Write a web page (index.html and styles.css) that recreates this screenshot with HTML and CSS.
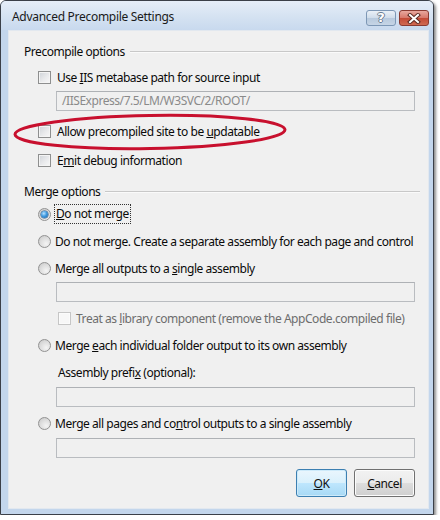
FILE: index.html
```html
<!DOCTYPE html>
<html>
<head>
<meta charset="utf-8">
<title>Advanced Precompile Settings</title>
<link rel="stylesheet" href="styles.css">
</head>
<body>
<div class="window">
  <div class="titlebar">
    <span class="title">Advanced Precompile Settings</span>
    <div class="caption-btns">
      <span class="cbtn help">?</span>
      <span class="cbtn close">
        <svg width="14" height="11" viewBox="0 0 14 11">
          <path d="M3 2 L11 9 M11 2 L3 9" stroke="#5a2a22" stroke-width="4" stroke-linecap="square" fill="none"/>
          <path d="M3 2 L11 9 M11 2 L3 9" stroke="#ffffff" stroke-width="2" stroke-linecap="square" fill="none"/>
        </svg>
      </span>
    </div>
  </div>
  <div class="client">
    <div class="group-head g1"><span>Precompile options</span><span class="rule"></span></div>
    <div class="row ind cb1"><span class="check"></span><span>Use <u>I</u>IS metabase path for source input</span></div>
    <div class="textbox tb1">/IISExpress/7.5/LM/W3SVC/2/ROOT/</div>
    <div class="row ind cb2"><span class="check"></span><span>Allow precompiled site to be <u>u</u>pdatable</span></div>
    <div class="row ind cb3"><span class="check"></span><span>E<u>m</u>it debug information</span></div>

    <div class="group-head g2"><span>Merge options</span><span class="rule"></span></div>
    <div class="row rad r1"><span class="radio on"></span><span class="focus"><u>D</u>o not merge</span></div>
    <div class="row rad r2"><span class="radio"></span><span>Do not merge. Create a separate assembly for each page and control</span></div>
    <div class="row rad r3"><span class="radio"></span><span>Merge all outputs to a <u>s</u>ingle assembly</span></div>
    <div class="textbox tb2"></div>
    <div class="row sub disabled cb4"><span class="check dis"></span><span>Treat as <u>l</u>ibrary component (remove the AppCode.compiled file)</span></div>
    <div class="row rad r4"><span class="radio"></span><span>Merge <u>e</u>ach individual folder output to its own assembly</span></div>
    <div class="row sub plabel"><span>Assembly prefi<u>x</u> (optional):</span></div>
    <div class="textbox tb3"></div>
    <div class="row rad r5"><span class="radio"></span><span>Merge all pages and co<u>n</u>trol outputs to a single assembly</span></div>
    <div class="textbox tb4"></div>

    <div class="buttons">
      <span class="btn default"><u>O</u>K</span>
      <span class="btn cancel"><u>C</u>ancel</span>
    </div>

    <svg class="annot" width="280" height="42" viewBox="0 0 280 42">
      <ellipse cx="138" cy="20" rx="135" ry="16.5" fill="none" stroke="#c8102e" stroke-width="3" transform="rotate(-1 138 20)"/>
    </svg>
  </div>
</div>
</body>
</html>
```
FILE: styles.css
```css
html, body {
  margin: 0;
  padding: 0;
  background: #ffffff;
}

body {
  font-family: "Noto Sans", "Open Sans", sans-serif;
  font-size: 12px;
  color: #0a0a0a;
}

.window {
  width: 434px;
  height: 515px;
  box-sizing: border-box;
  border: 1px solid #3b4048;
  border-radius: 6px 6px 0 0;
  background: #c3d6ec;
  padding: 0 4px 5px 7px;
  box-shadow: 2px 2px 3px rgba(0, 0, 0, 0.45);
  display: flex;
  flex-direction: column;
}

.titlebar {
  height: 29px;
  margin: 0 -4px 0 -7px;
  padding: 0 4px 0 11px;
  border-radius: 5px 5px 0 0;
  background: linear-gradient(#e6eef8 0%, #d6e3f2 50%, #c8d9ee 100%);
  display: flex;
  align-items: center;
  justify-content: space-between;
  flex: none;
}

.title {
  font-size: 12px;
  color: #1a1a1a;
  letter-spacing: -0.3px;
  padding-top: 1px;
}

.caption-btns {
  display: flex;
  gap: 3px;
  align-self: flex-start;
  margin-top: 9px;
}

.cbtn {
  height: 16px;
  box-sizing: border-box;
  border-radius: 3px;
  display: flex;
  align-items: center;
  justify-content: center;
}

.help {
  width: 30px;
  border: 1px solid #7d97b5;
  background: linear-gradient(#eaf0f7 0%, #cfdcea 50%, #b7c9dd 51%, #c6d5e6 100%);
  color: #fff;
  font-family: "DejaVu Sans", sans-serif;
  font-size: 13px;
  font-weight: bold;
  line-height: 14px;
  text-shadow: -1px 0 #6b7c90, 1px 0 #6b7c90, 0 -1px #6b7c90, 0 1px #6b7c90;
}

.close {
  width: 30px;
  border: 1px solid #8a3b32;
  background: linear-gradient(#e8a89e 0%, #d7796b 48%, #c34a36 52%, #cf6a52 100%);
}

.client {
  position: relative;
  flex: 1;
  background: #f0f0f0;
  border: 1px solid #e2e8ef;
  box-sizing: border-box;
  padding: 11px 8px 0 15px;
}

.group-head {
  height: 18px;
  display: flex;
  align-items: center;
  gap: 5px;
}

.group-head .rule {
  flex: 1;
  height: 0;
  border-top: 1px solid #c8c8c8;
  border-bottom: 1px solid #fafafa;
  margin-top: 1px;
}

.row {
  height: 18px;
  display: flex;
  align-items: center;
  white-space: nowrap;
  letter-spacing: -0.45px;
}

.group-head span:first-child,
.textbox,
.btn {
  letter-spacing: -0.45px;
}

.ind {
  padding-left: 14px;
  gap: 6px;
}

.rad {
  padding-left: 14px;
  gap: 4px;
}

.sub {
  padding-left: 34px;
  gap: 5px;
}

.disabled {
  color: #6d6d6d;
}

.check {
  width: 13px;
  height: 13px;
  box-sizing: border-box;
  border: 1px solid #8e8f8f;
  background: linear-gradient(135deg, #cfd3d8 0%, #e9eaec 55%, #f8f8f8 100%);
  box-shadow: inset 0 0 0 1px #f4f4f4;
  flex: none;
}

.check.dis {
  border-color: #c6c6c6;
  background: #f7f7f7;
  box-shadow: inset 0 0 0 1px #fbfbfb;
}

.radio {
  width: 13px;
  height: 13px;
  box-sizing: border-box;
  border-radius: 50%;
  border: 1px solid #929292;
  background: radial-gradient(circle at 65% 70%, #f4f4f4 0%, #dadada 60%, #c4c4c4 100%);
  flex: none;
  position: relative;
}

.radio.on::after {
  content: "";
  position: absolute;
  left: 2px;
  top: 2px;
  width: 7px;
  height: 7px;
  border-radius: 50%;
  background: radial-gradient(circle at 40% 35%, #b9e2ff 0%, #3f9ae0 45%, #1b5c9c 100%);
  box-shadow: 0 0 0 0.5px #26507a;
}

.focus {
  outline: 1px dotted #333;
  padding: 0 1px;
  height: 18px;
  line-height: 18px;
}

.textbox {
  height: 20px;
  box-sizing: border-box;
  margin-left: 32px;
  margin-right: 5px;
  border: 1px solid #b9bcc0;
  border-top-color: #aeb1b5;
  background: #f0f0f0;
  color: #8a8a8a;
  padding: 0 5px;
  line-height: 18px;
  font-size: 12px;
}

.g1 { margin-top: 0; }
.cb1 { margin-top: 8px; }
.tb1 { margin-top: 5px; }
.cb2 { margin-top: 11px; }
.cb3 { margin-top: 11px; }
.g2 { margin-top: 13px; }
.r1 { margin-top: 5px; }
.r2 { margin-top: 9px; }
.r3 { margin-top: 9px; }
.tb2 { margin-top: 5px; }
.cb4 { margin-top: 7px; }
.r4 { margin-top: 9px; }
.plabel { margin-top: 9px; }
.tb3 { margin-top: 6px; }
.r5 { margin-top: 7px; }
.tb4 { margin-top: 6px; }

.buttons {
  margin-top: 11px;
  margin-right: 5px;
  display: flex;
  justify-content: flex-end;
  gap: 7px;
}

.btn {
  height: 28px;
  box-sizing: border-box;
  border-radius: 3px;
  display: flex;
  align-items: center;
  justify-content: center;
  color: #111;
}

.btn.default {
  width: 51px;
  border: 1px solid #3c7fb1;
  background: linear-gradient(#eaf6fd 0%, #d9f0fc 50%, #bee6fd 51%, #a7d9f5 100%);
  box-shadow: inset 0 0 0 1px #cdeafa;
}

.btn.cancel {
  width: 61px;
  border: 1px solid #707070;
  background: linear-gradient(#f2f2f2 0%, #ebebeb 50%, #dddddd 51%, #cfcfcf 100%);
  box-shadow: inset 0 0 0 1px #fcfcfc;
}

.annot {
  position: absolute;
  left: 3px;
  top: 81px;
  pointer-events: none;
}
```
